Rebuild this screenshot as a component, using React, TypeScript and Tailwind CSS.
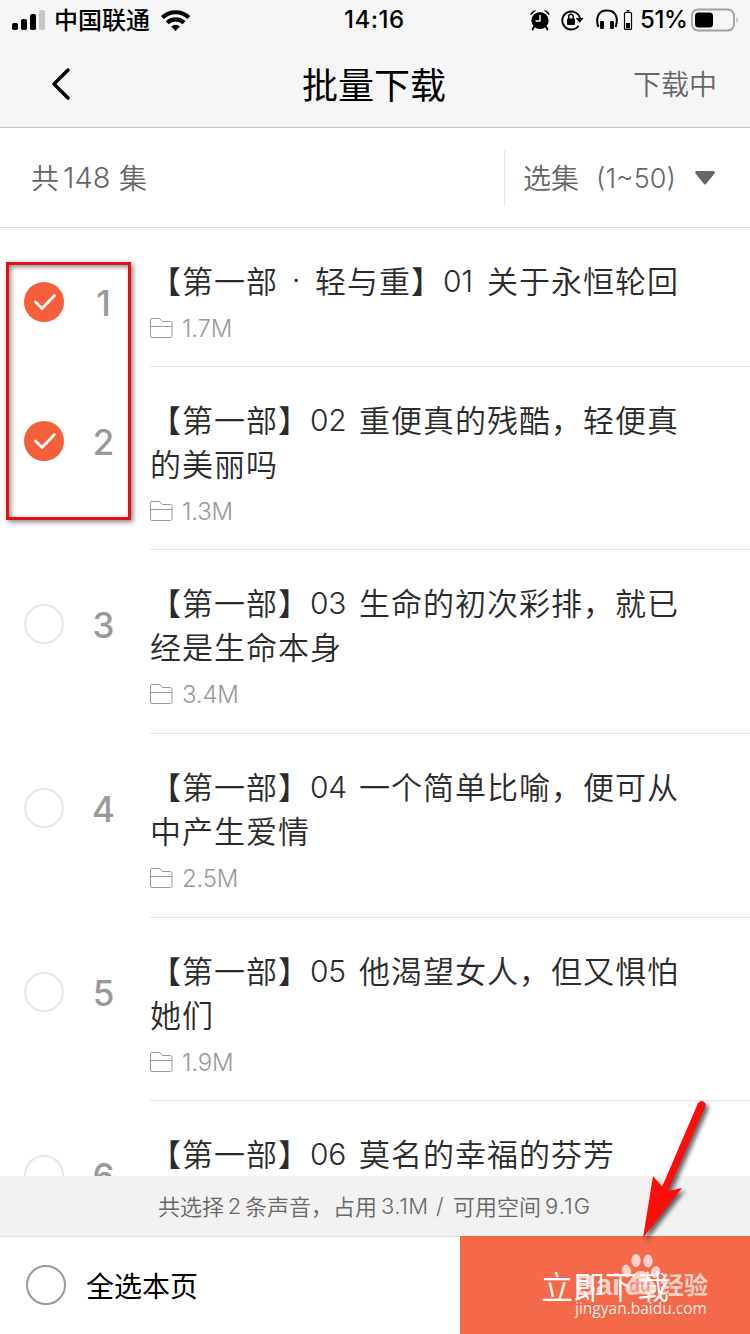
import React from "react";

type Line = { title: string; dot?: string; rest?: string; no?: string; noWidth?: string; text?: string };
type Episode = { no: number; lines: Line[]; size?: string; checked?: boolean; height: string };

const episodes: Episode[] = [
  {
    no: 1,
    lines: [{ title: "【第一部", dot: "·", rest: "轻与重】", no: "01", noWidth: "w-[44px]", text: "关于永恒轮回" }],
    size: "1.7M",
    checked: true,
    height: "h-[139px]",
  },
  { no: 2, lines: [{ title: "【第一部】", no: "02", text: "重便真的残酷，轻便真" }, { title: "的美丽吗" }], size: "1.3M", checked: true, height: "h-[183px]" },
  { no: 3, lines: [{ title: "【第一部】", no: "03", text: "生命的初次彩排，就已" }, { title: "经是生命本身" }], size: "3.4M", height: "h-[184px]" },
  { no: 4, lines: [{ title: "【第一部】", no: "04", text: "一个简单比喻，便可从" }, { title: "中产生爱情" }], size: "2.5M", height: "h-[184px]" },
  { no: 5, lines: [{ title: "【第一部】", no: "05", text: "他渴望女人，但又惧怕" }, { title: "她们" }], size: "1.9M", height: "h-[183px]" },
  { no: 6, lines: [{ title: "【第一部】", no: "06", text: "莫名的幸福的芬芳" }], height: "h-[139px]" },
];

const cjk = "font-['Noto_Sans_CJK_SC',sans-serif]";
const latin = "font-['Inter','Noto_Sans_CJK_SC',sans-serif]";
const demi = "font-['Noto_Sans_CJK_SC_DemiLight','Noto_Sans_CJK_SC',sans-serif] font-[350]";

function StatusBar() {
  return (
    <div className="flex h-10 items-center text-black">
      <svg className="ml-3 h-[22px] w-[34px] shrink-0" viewBox="0 0 34 22">
        <rect x="0" y="14" width="6" height="7" rx="1.8" />
        <rect x="9" y="10" width="6" height="11" rx="1.8" />
        <rect x="18" y="5" width="6" height="16" rx="1.8" />
        <rect x="27" y="1" width="6" height="20" rx="1.8" fill="#c6c6c6" />
      </svg>
      <span className={`${cjk} ml-[8px] h-10 w-[98px] whitespace-nowrap text-[24px] leading-[38px] font-medium`}>中国联通</span>
      <svg className="ml-[8px] h-[24px] w-[32px] shrink-0" viewBox="0 0 32 24" fill="none" stroke="#000" strokeWidth="4.2">
        <path d="M2.4 9.6a19 19 0 0 1 26.4 0" />
        <path d="M7.2 14.8a12 12 0 0 1 16.8 0" />
        <path d="M11.3 18.6a6.2 6.2 0 0 1 8.6 0L15.6 23z" fill="#000" stroke="none" />
      </svg>
      <span className={`${latin} ml-[152px] w-[64px] whitespace-nowrap text-[24px] leading-10 tracking-[0.5px] font-medium`}>14:16</span>
      <svg className="ml-[122px] h-[22px] w-[20px] shrink-0" viewBox="0 0 20 22">
        <circle cx="10" cy="11.5" r="8.6" />
        <path d="M.5 6.500Q0 2 6.500 1z M19.500 6.500Q20 2 13.500 1z" />
        <path d="m4.500 17-2 3.500M15.500 17l2 3.500" stroke="#000" strokeWidth="2" strokeLinecap="round" />
        <path d="M10 6V12H5.500" stroke="#f6f6f6" strokeWidth="1.500" fill="none" />
      </svg>
      <svg className="ml-[11px] h-[22px] w-[23px] shrink-0" viewBox="0 0 23 22">
        <path d="M17.600 16.800a9 9 0 1 1 1.500-7" fill="none" stroke="#000" strokeWidth="1.900" />
        <path d="M14.800 9h7.600l-3.700 5z" />
        <rect x="6" y="9.500" width="8" height="6.500" rx="1" />
        <path d="M7.800 10V7.500a2.200 2.200 0 0 1 4.400 0V10" fill="none" stroke="#000" strokeWidth="1.500" />
      </svg>
      <svg className="ml-[12px] h-[22px] w-[22px] shrink-0" viewBox="0 0 22 22">
        <path d="M2.300 18C-.5 9 2 1.500 11 1.500S22.500 9 19.700 18" fill="none" stroke="#000" strokeWidth="2" />
        <rect x="4" y="12" width="4" height="8" rx="1.300" />
        <rect x="14" y="12" width="4" height="8" rx="1.300" />
      </svg>
      <svg className="ml-[5px] h-[22px] w-[10px] shrink-0" viewBox="0 0 10 22">
        <rect x="1.500" y="3.500" width="7" height="17" rx="1" fill="none" stroke="#000" strokeWidth="1.200" />
        <rect x="3.500" y="1" width="3" height="1.500" />
        <rect x="3" y="14" width="4" height="5.500" />
      </svg>
      <span className={`${latin} ml-[7px] w-[47px] whitespace-nowrap text-[24px] leading-10 tracking-[-0.400px] font-medium`}>51%</span>
      <svg className="ml-[4px] h-[24px] w-[48px] shrink-0" viewBox="0 0 48 24">
        <rect x="1" y="1.500" width="42" height="21" rx="6" fill="none" stroke="#a0a0a0" strokeWidth="1.800" />
        <rect x="4" y="4.500" width="18" height="15" rx="3.500" />
        <path d="M45.500 9q2.500 3 0 6z" fill="#a0a0a0" />
      </svg>
    </div>
  );
}

function Folder() {
  return (
    <svg className="h-[20px] w-[23px] shrink-0" viewBox="0 0 23 20" fill="none" stroke="#999" strokeWidth="1">
      <path d="M.5 2Q.5.500 2 .500H9.500L12.500 3.500H20.500Q22 3.500 22 5V18Q22 19.500 20.500 19.500H2Q.500 19.500 .500 18ZM.500 8.500H22" />
    </svg>
  );
}

function Row({ e }: { e: Episode }) {
  return (
    <li className={`flex shrink-0 ${e.height}`}>
      <div className="flex h-[148px] w-[88px] items-center pl-6">
        {e.checked ? (
          <svg className="size-10" viewBox="0 0 40 40">
            <circle cx="20" cy="20" r="20" fill="#f55f3b" />
            <path d="m11.500 20 6.500 6.500 12.500-13" fill="none" stroke="#fff" strokeWidth="2.800" strokeLinecap="round" />
          </svg>
        ) : (
          <span className="size-10 rounded-full border-2 border-[#e6e6e6]" />
        )}
      </div>
      <div className={`${latin} h-[152px] w-[31px] text-center text-[35px] leading-[151px] font-medium text-[#999]`}>{e.no}</div>
      <div className="ml-[31px] flex flex-1 flex-col border-b border-[#e4e4e4] pt-[30px]">
        {e.lines.map((l, i) => (
          <div key={i} className={`${demi} flex h-[44px] whitespace-nowrap text-[31px] leading-[44px] tracking-[1px] text-[#2b2b2b]`}>
            <span>{l.title}</span>
            {l.dot && <span className={`${latin} w-[37px] text-center`}>{l.dot}</span>}
            {l.rest && <span>{l.rest}</span>}
            {l.no && (
              <span className={`${latin} ${l.noWidth ?? "w-[49px]"} text-[30px] leading-[46px] tracking-[-0.300px] font-[350]`}>{l.no}</span>
            )}
            {l.text && <span>{l.text}</span>}
          </div>
        ))}
        {e.size && (
          <div className="mt-[16px] flex h-5 items-center gap-[9px]">
            <Folder />
            <span className={`${latin} pt-px text-[24px] tracking-[-0.200px] font-light text-[#999]`}>{e.size}</span>
          </div>
        )}
      </div>
    </li>
  );
}

function Watermark() {
  return (
    <div className="absolute top-[1250px] left-[575px] h-[70px] w-[140px] text-white/70">
      <svg className="absolute top-[3px] left-[46px] h-[46px] w-[40px]" viewBox="0 0 40 46" fill="currentColor">
        <ellipse cx="5.500" cy="18" rx="4.500" ry="6.500" transform="rotate(-15 5.500 18)" />
        <ellipse cx="15" cy="7.500" rx="4.700" ry="6.500" />
        <ellipse cx="27" cy="8" rx="4.700" ry="6.500" />
        <ellipse cx="34.500" cy="19" rx="4.500" ry="6" transform="rotate(15 34.500 19)" />
        <path d="M20 18c8 0 9 8 13 12s3 12-4 12c-4 0-5-1-9-1s-5 1-9 1c-7 0-8-8-4-12s5-12 13-12z" />
      </svg>
      <span className="absolute top-[18px] left-0 font-['Liberation_Sans',sans-serif] text-[29px] leading-[34px] font-bold">Bai</span>
      <span className="absolute top-[27px] left-[54px] font-['Liberation_Sans',sans-serif] text-[18px] leading-[18px] font-bold text-[#f3694a]/60">du</span>
      <span className={`${cjk} absolute top-[17px] left-[85px] text-[24px] leading-[34px] font-bold whitespace-nowrap`}>经验</span>
      <span className="absolute top-[47px] left-0 font-['Open_Sans',sans-serif] text-[15.500px] leading-[22px] whitespace-nowrap text-white/85">jingyan.baidu.com</span>
    </div>
  );
}

export default function App() {
  return (
    <div className={`${cjk} relative flex h-[1334px] w-[750px] flex-col overflow-hidden bg-white`}>
      <header className="h-[128px] shrink-0 border-b border-[#c4c4c4] bg-[#f6f6f6]">
        <StatusBar />
        <div className="flex h-[85px] items-center justify-between pr-[33px] pl-[51px]">
          <svg className="mt-[2px] h-[32px] w-[82px]" viewBox="0 0 82 32" fill="none" stroke="#000" strokeWidth="3.400" strokeLinecap="round" strokeLinejoin="round">
            <path d="M17 2 3 16l14 14" />
          </svg>
          <h1 className="mr-[18px] text-[36px] leading-[44px] font-normal">批量下载</h1>
          <span className={`${demi} text-[28px] leading-[44px] text-[#666]`}>下载中</span>
        </div>
      </header>
      <div className={`${demi} flex h-[100px] shrink-0 items-center justify-between border-b border-[#e0e0e0] text-[28px] text-[#666]`}>
        <div className="flex items-center pb-[2px] pl-[31px]">
          <span>共</span>
          <span className={`${latin} mx-[4px] w-[52px] pt-[2px] text-[29px]`}>148</span>
          <span>集</span>
        </div>
        <div className="flex h-[56px] w-[246px] items-center border-l border-[#e6e6e6] pl-[18px]">
          <span className="pb-[2px]">选集</span>
          <span className={`${latin} ml-[17px] w-[96px] pt-[3px] whitespace-nowrap text-[27px]`}>(1~50)</span>
          <svg className="ml-[2px] h-[16px] w-[22px]" viewBox="0 0 22 16" fill="#666">
            <path d="M2.500 1h17q2 .5 1 2.500l-8.500 10.500q-1 1.200-2 0L1.500 3.500q-1-2 1-2.500z" />
          </svg>
        </div>
      </div>
      <ul className="flex h-[948px] shrink-0 flex-col overflow-hidden">
        {episodes.map((e) => (
          <Row key={e.no} e={e} />
        ))}
      </ul>
      <div className={`${demi} flex h-[60px] shrink-0 items-center bg-[#f2f2f2] pb-[2px] pl-[158px] text-[22px] whitespace-nowrap text-[#666]`}>
        <span>共选择</span>
        <span className={`${latin} w-[21px] pt-[2px] text-center`}>2</span>
        <span className="w-[136px]">条声音，占用</span>
        <span className={`${latin} w-[55px] pt-[2px] tracking-[0.500px]`}>3.1M</span>
        <span className={`${latin} w-[17px] pt-[2px]`}>/</span>
        <span>可用空间</span>
        <span className={`${latin} ml-[4px] pt-[2px] tracking-[1px]`}>9.1G</span>
      </div>
      <footer className="flex h-[98px] shrink-0">
        <div className="flex flex-1 items-center border-t border-[#dcdcdc] pb-[2px] pl-[26px]">
          <span className="size-10 rounded-full border-2 border-[#999]" />
          <span className="ml-5 text-[28px]">全选本页</span>
        </div>
        <button className={`${demi} w-[290px] bg-[#f3694a] text-[32px] text-white`}>立即下载</button>
      </footer>
      <div className="absolute top-[262px] left-[6px] h-[258px] w-[125px] border-[3px] border-[#e01014] shadow-[2px_2px_5px_rgba(0,0,0,0.5),inset_2px_2px_5px_rgba(0,0,0,0.45)]" />
      <Watermark />
      <svg className="absolute top-[1090px] left-[630px] h-[160px] w-[95px] drop-shadow-[3px_3px_2px_rgba(0,0,0,0.6)]" viewBox="0 0 95 160" fill="#fe0d0a">
        <path d="M13 148 23 86 32 97 68 13q4-4 7 0 1 1 .5 3L38 101l14-3z" />
      </svg>
    </div>
  );
}
